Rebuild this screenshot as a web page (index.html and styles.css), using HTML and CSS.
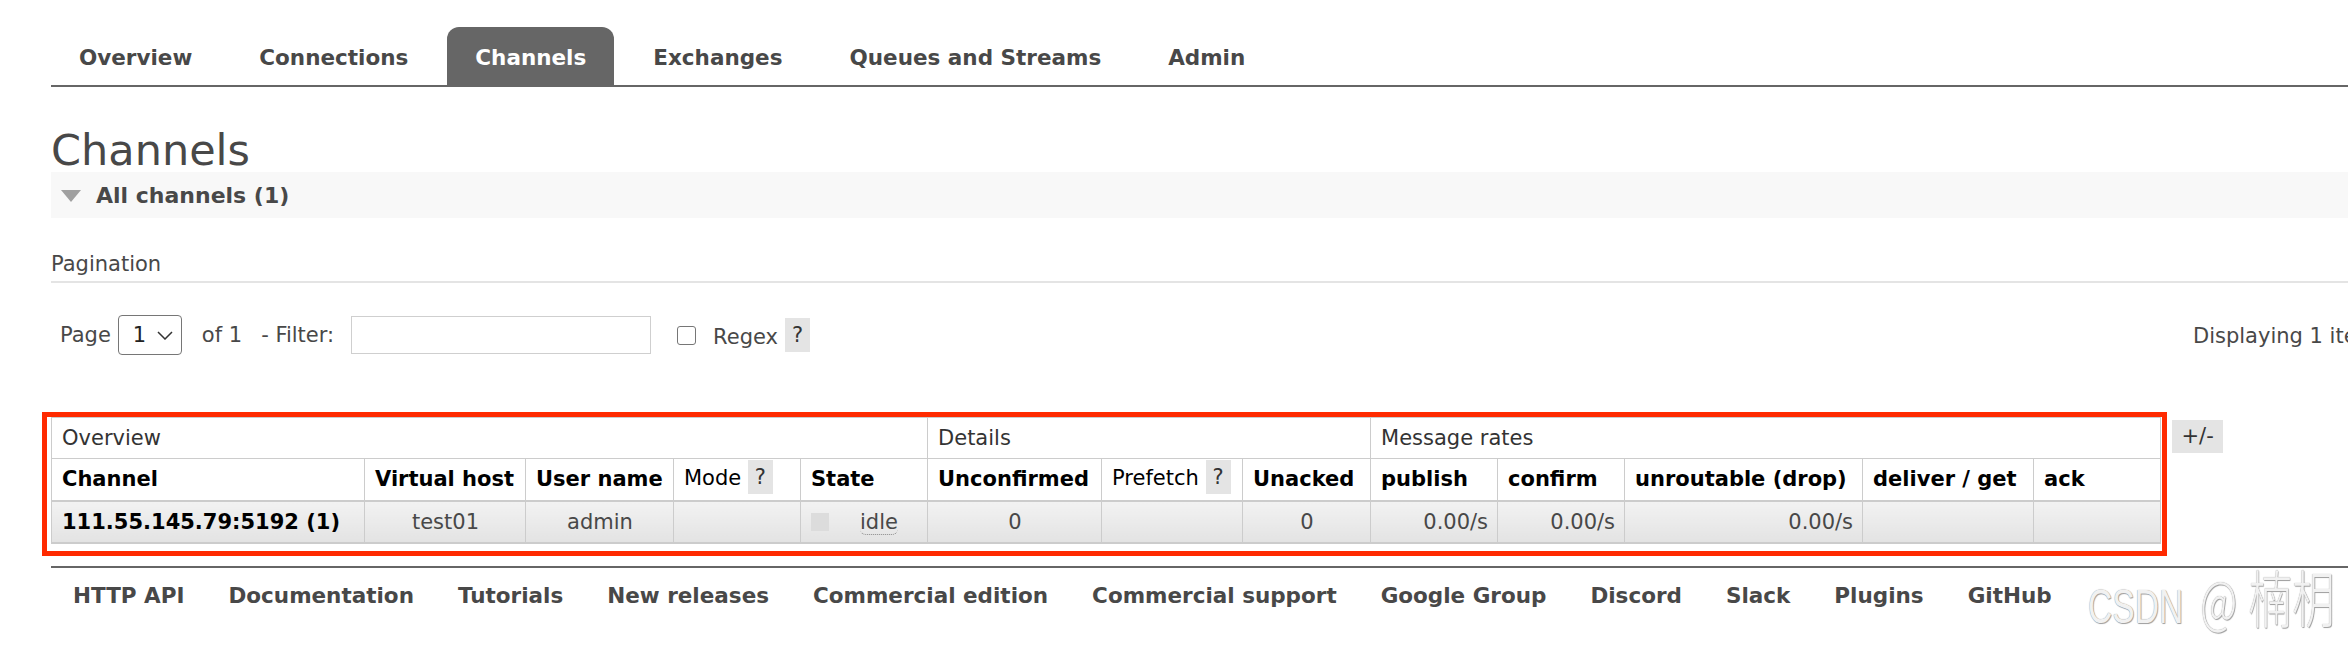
FILE: index.html
```html
<!DOCTYPE html>
<html lang="en">
<head>
  <meta charset="UTF-8">
  <title>RabbitMQ Management: Channels</title>
  <link rel="stylesheet" href="styles.css">
</head>
<body>

<div class="page">
  <ul class="tabs">
    <li><a href="#">Overview</a></li>
    <li><a href="#">Connections</a></li>
    <li class="active"><a href="#">Channels</a></li>
    <li><a href="#">Exchanges</a></li>
    <li><a href="#">Queues and Streams</a></li>
    <li><a href="#">Admin</a></li>
  </ul>

  <h1>Channels</h1>
  <div class="section-head"><span class="arrow"></span>All channels (1)</div>

  <h3 class="pager-title">Pagination</h3>
  <div class="pager">
    <div class="pager-left">
      <span class="lbl">Page</span>
      <div class="select">1
        <svg width="16" height="9" viewBox="0 0 16 9"><path d="M1 1 L8 8 L15 1" fill="none" stroke="#333" stroke-width="1.5"/></svg>
      </div>
      <span class="lbl of">of 1</span>
      <span class="lbl filter-lbl">- Filter:</span>
      <input class="filter" type="text">
      <input class="check" type="checkbox">
      <span class="lbl regex">Regex</span>
      <span class="help">?</span>
    </div>
    <div class="pager-right">Displaying 1 item , page size up to:</div>
  </div>

  <div class="grid-wrap">
    <table class="list">
      <colgroup>
        <col class="c-channel"><col class="c-vhost"><col class="c-user"><col class="c-mode"><col class="c-state">
        <col class="c-unconf"><col class="c-prefetch"><col class="c-unacked">
        <col class="c-rate"><col class="c-rate"><col class="c-unroute"><col class="c-deliver"><col class="c-rate">
      </colgroup>
      <thead>
        <tr class="group">
          <th colspan="5">Overview</th>
          <th colspan="3">Details</th>
          <th colspan="5">Message rates</th>
        </tr>
        <tr class="cols">
          <th>Channel</th>
          <th>Virtual host</th>
          <th>User name</th>
          <th class="plain">Mode <span class="help">?</span></th>
          <th>State</th>
          <th>Unconfirmed</th>
          <th class="plain">Prefetch <span class="help">?</span></th>
          <th>Unacked</th>
          <th>publish</th>
          <th>confirm</th>
          <th>unroutable (drop)</th>
          <th>deliver / get</th>
          <th>ack</th>
        </tr>
      </thead>
      <tbody>
        <tr class="alt">
          <td class="name">111.55.145.79:5192 (1)</td>
          <td class="c">test01</td>
          <td class="c">admin</td>
          <td></td>
          <td><span class="state-box"></span><abbr class="state">idle</abbr></td>
          <td class="c">0</td>
          <td></td>
          <td class="c">0</td>
          <td class="r">0.00/s</td>
          <td class="r">0.00/s</td>
          <td class="r">0.00/s</td>
          <td></td>
          <td></td>
        </tr>
      </tbody>
    </table>
    <span class="toggle">+/-</span>
    <div class="mark"></div>
  </div>

  <ul class="footer">
    <li><a href="#">HTTP API</a></li>
    <li><a href="#">Documentation</a></li>
    <li><a href="#">Tutorials</a></li>
    <li><a href="#">New releases</a></li>
    <li><a href="#">Commercial edition</a></li>
    <li><a href="#">Commercial support</a></li>
    <li><a href="#">Google Group</a></li>
    <li><a href="#">Discord</a></li>
    <li><a href="#">Slack</a></li>
    <li><a href="#">Plugins</a></li>
    <li><a href="#">GitHub</a></li>
  </ul>
</div>

<div class="watermark">CSDN <span class="wm-at">@</span><span class="wm-cjk">楠枂</span></div>

</body>
</html>
```

FILE: styles.css
```css
* { box-sizing: border-box; }
html, body {
  margin: 0;
  overflow: hidden;
  background: #fff;
}
body {
  font-family: "DejaVu Sans", Verdana, sans-serif;
  font-size: 21px;
  color: #484848;
  position: relative;
  height: 655px;
}
a {
  color: #484848;
  text-decoration: none;
}
.page {
  padding-left: 51px;
}

/* top menu */
.tabs {
  list-style: none;
  margin: 27px 0 0;
  padding: 0;
  display: flex;
  border-bottom: 2px solid #666;
}
.tabs li {
  margin-right: 11px;
}
.tabs a {
  display: block;
  height: 58px;
  padding: 4px 28px 0;
  line-height: 54px;
  font-size: 21.5px;
  font-weight: bold;
  border-radius: 12px 12px 0 0;
}
.tabs .active a {
  background: #666;
  color: #fff;
}

h1 {
  margin: 41px 0 0;
  font-size: 43px;
  line-height: 44px;
  font-weight: normal;
  color: #484848;
}
.section-head {
  display: flex;
  align-items: center;
  height: 46px;
  padding-left: 10px;
  background: #f8f8f8;
  font-size: 22px;
  font-weight: bold;
  color: #484848;
}
.arrow {
  width: 0;
  height: 0;
  border-left: 10px solid transparent;
  border-right: 10px solid transparent;
  border-top: 12px solid #a0a0a0;
  margin: 2px 15px 0 0;
}

/* pagination */
.pager-title {
  margin: 34px 0 0;
  padding-bottom: 5px;
  font-size: 21px;
  line-height: 24px;
  font-weight: normal;
  border-bottom: 2px solid #e4e4e4;
}
.pager {
  display: flex;
  align-items: center;
  margin-top: 32px;
  height: 40px;
}
.pager-left {
  display: flex;
  align-items: center;
  width: 2142px;
  flex-shrink: 0;
  padding-left: 9px;
}
.pager-right {
  white-space: nowrap;
  margin-top: 2px;
}
.lbl { white-space: nowrap; }
.select {
  display: flex;
  align-items: center;
  justify-content: space-between;
  width: 64px;
  height: 40px;
  margin-left: 7px;
  padding: 0 8px 0 14px;
  border: 1px solid #767676;
  border-radius: 4px;
  color: #222;
}
.of { margin-left: 20px; }
.filter-lbl { margin-left: 19px; }
.filter {
  width: 300px;
  height: 38px;
  margin: 0 0 0 17px;
  border: 1px solid #cfcfcf;
  font: inherit;
}
.check {
  appearance: none;
  width: 19px;
  height: 19px;
  margin: 0 0 0 26px;
  border: 1.5px solid #767676;
  border-radius: 3px;
}
.regex {
  margin-left: 17px;
  margin-top: 4px;
}
.help {
  display: inline-flex;
  align-items: center;
  justify-content: center;
  width: 25px;
  height: 34px;
  margin-left: 7px;
  background: #e4e4e4;
  color: #333;
  font-weight: normal;
}

/* channels table */
.grid-wrap {
  position: relative;
  display: flex;
  align-items: flex-start;
  margin-top: 62px;
}
table.list {
  table-layout: fixed;
  border-collapse: collapse;
  width: 2109px;
}
.c-channel { width: 313px; }
.c-vhost { width: 161px; }
.c-user { width: 148px; }
.c-mode { width: 127px; }
.c-state { width: 127px; }
.c-unconf { width: 174px; }
.c-prefetch { width: 141px; }
.c-unacked { width: 128px; }
.c-rate { width: 127px; }
.c-unroute { width: 238px; }
.c-deliver { width: 171px; }
.list th, .list td {
  border: 1px solid #ccc;
  padding: 0 9px 0 10px;
  line-height: 24px;
  white-space: nowrap;
  text-align: left;
}
.list tr.group th {
  height: 41px;
  font-weight: normal;
  color: #333;
}
.list tr.cols th {
  height: 42px;
  color: #000;
  border-bottom: 2px solid #ccc;
}
.list tr.cols th.plain {
  font-weight: normal;
}
.list th .help {
  vertical-align: middle;
  margin: -4px 0 0 0;
}
.list tr.alt td {
  height: 42px;
  background: linear-gradient(#f2f2f2, #e3e3e3);
  border-bottom: 2px solid #ccc;
}
.list td.name {
  font-weight: bold;
  color: #000;
}
.list td.c { text-align: center; }
.list td.r { text-align: right; }
.state-box {
  display: inline-block;
  width: 18px;
  height: 18px;
  margin-right: 31px;
  background: #dcdcdc;
  vertical-align: -2px;
}
abbr.state {
  text-decoration: none;
  border-bottom: 1px dotted #888;
  border-radius: 0 0 6px 6px;
}
.toggle {
  margin: 3px 0 0 11px;
  width: 51px;
  height: 33px;
  line-height: 33px;
  text-align: center;
  background: #e4e4e4;
  color: #333;
}
.mark {
  position: absolute;
  left: -9px;
  top: -5px;
  width: 2125px;
  height: 144px;
  border: 5px solid #ff2a00;
  pointer-events: none;
}

/* footer */
.footer {
  list-style: none;
  display: flex;
  margin: 22px 0 0;
  padding: 15px 0 0 22px;
  border-top: 2px solid #666;
}
.footer li {
  margin-right: 44px;
}
.footer a {
  font-size: 21.5px;
  line-height: 25px;
  font-weight: bold;
}

.watermark {
  position: absolute;
  left: 2088px;
  top: 583px;
  font-family: "Liberation Sans", sans-serif;
  font-size: 48px;
  line-height: 48px;
  color: #f1f1f1;
  text-shadow: 0 0 1px #8a8a8a, 1px 1px 1px #a0a0a0;
  white-space: nowrap;
  transform: scaleX(0.7);
  transform-origin: 0 0;
}
.wm-at, .wm-cjk {
  font-family: "Noto Sans CJK SC", sans-serif;
  font-weight: 300;
  line-height: 0;
}
.wm-at {
  font-size: 58px;
  margin-left: 11px;
}
.wm-cjk {
  font-size: 62px;
  margin-left: 16px;
}
```
